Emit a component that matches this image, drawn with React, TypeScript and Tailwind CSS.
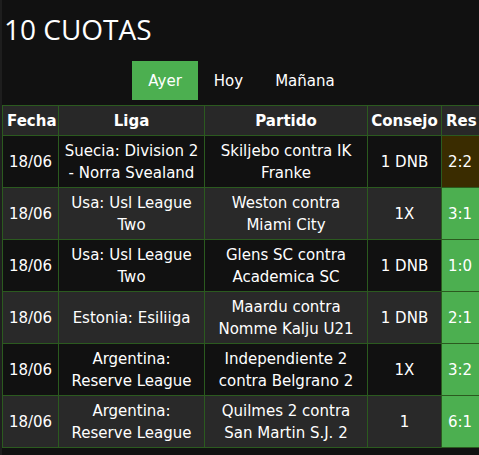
import React from "react";

const rows = [
  { liga: "Suecia: Division 2 - Norra Svealand", partido: "Skiljebo contra IK Franke", consejo: "1 DNB", res: "2:2", draw: true },
  { liga: "Usa: Usl League Two", partido: "Weston contra Miami City", consejo: "1X", res: "3:1" },
  { liga: "Usa: Usl League Two", partido: "Glens SC contra Academica SC", consejo: "1 DNB", res: "1:0" },
  { liga: "Estonia: Esiliiga", partido: "Maardu contra Nomme Kalju U21", consejo: "1 DNB", res: "2:1" },
  { liga: "Argentina: Reserve League", partido: "Independiente 2 contra Belgrano 2", consejo: "1X", res: "3:2" },
  { liga: "Argentina: Reserve League", partido: "Quilmes 2 contra San Martin S.J. 2", consejo: "1", res: "6:1" },
];

export default function App() {
  return (
    <div className="w-[479px] h-[455px] overflow-hidden bg-[#111111] text-white">
      <div className="h-full border-l-2 border-[#1e1e1e]" style={{ fontFamily: '"DejaVu Sans", Verdana, sans-serif' }}>
        <h1
          className="pt-[9px] pl-[2px] text-[28px] leading-[40px] font-normal text-white"
          style={{ fontFamily: '"Open Sans", "Noto Sans", sans-serif' }}
        >
          10 CUOTAS
        </h1>
        <div className="mt-[12px] pl-[2px] flex justify-center text-[15px] leading-[22px]">
          <div className="h-[39px] px-4 flex items-center bg-[#4caf50] text-white">Ayer</div>
          <div className="h-[39px] px-4 flex items-center text-white">Hoy</div>
          <div className="h-[39px] px-4 flex items-center text-white">Mañana</div>
        </div>
        <table className="mt-[5px] border-collapse text-[15px] leading-[22px] text-center table-fixed w-[483px]">
          <colgroup>
            <col className="w-[56px]" />
            <col className="w-[146px]" />
            <col className="w-[163px]" />
            <col className="w-[74px]" />
            <col className="w-[44px]" />
          </colgroup>
          <thead>
            <tr className="bg-[#282828] font-bold">
              <th className="border border-[#2b5a1f] px-[4px] py-[3.5px] text-left">Fecha</th>
              <th className="border border-[#2b5a1f] px-[4px] py-[3.5px]">Liga</th>
              <th className="border border-[#2b5a1f] px-[4px] py-[3.5px]">Partido</th>
              <th className="border border-[#2b5a1f] px-[2px] py-[3.5px]">Consejo</th>
              <th className="border border-[#2b5a1f] pl-[4px] pr-0 py-[3.5px] text-left">Res</th>
            </tr>
          </thead>
          <tbody>
            {rows.map((r, i) => (
              <tr key={i} className={i % 2 === 0 ? "bg-[#111111]" : "bg-[#292929]"}>
                <td className="border border-[#2b5a1f] px-[4px] py-[3.5px] h-[52px]">18/06</td>
                <td className="border border-[#2b5a1f] px-[4px] py-[3.5px]">{r.liga}</td>
                <td className="border border-[#2b5a1f] px-[4px] py-[3.5px]">{r.partido}</td>
                <td className="border border-[#2b5a1f] px-[4px] py-[3.5px]">{r.consejo}</td>
                <td
                  className={
                    "border border-[#2b5a1f] pl-[6px] pr-0 py-[3.5px] text-left " +
                    (r.draw ? "bg-[#3a2c00]" : "bg-[#4caf50]")
                  }
                >
                  {r.res}
                </td>
              </tr>
            ))}
          </tbody>
        </table>
      </div>
    </div>
  );
}
